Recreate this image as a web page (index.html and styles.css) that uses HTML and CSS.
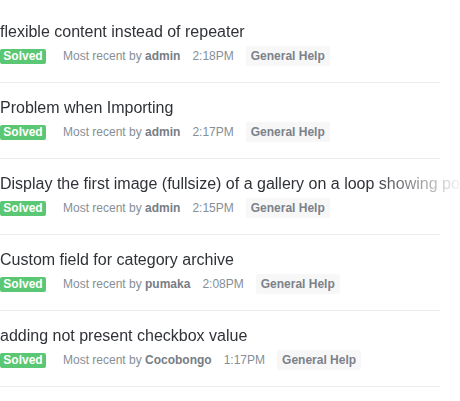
FILE: index.html
```html
<!DOCTYPE html>
<html>
<head>
<meta charset="utf-8">
<link rel="stylesheet" href="styles.css">
</head>
<body>
<ul class="list">
  <li class="item">
    <div class="title">flexible content instead of repeater</div>
    <div class="meta"><span class="badge">Solved</span><span class="recent">Most recent by <b>admin</b></span><span class="time">2:18PM</span><span class="tag">General Help</span></div>
  </li>
  <li class="item">
    <div class="title">Problem when Importing</div>
    <div class="meta"><span class="badge">Solved</span><span class="recent">Most recent by <b>admin</b></span><span class="time">2:17PM</span><span class="tag">General Help</span></div>
  </li>
  <li class="item">
    <div class="title">Display the first image (fullsize) of a gallery on a loop showing posts</div>
    <div class="meta"><span class="badge">Solved</span><span class="recent">Most recent by <b>admin</b></span><span class="time">2:15PM</span><span class="tag">General Help</span></div>
  </li>
  <li class="item">
    <div class="title">Custom field for category archive</div>
    <div class="meta"><span class="badge">Solved</span><span class="recent">Most recent by <b>pumaka</b></span><span class="time">2:08PM</span><span class="tag">General Help</span></div>
  </li>
  <li class="item">
    <div class="title">adding not present checkbox value</div>
    <div class="meta"><span class="badge">Solved</span><span class="recent">Most recent by <b>Cocobongo</b></span><span class="time">1:17PM</span><span class="tag">General Help</span></div>
  </li>
</ul>
</body>
</html>
```
FILE: styles.css
```css
html, body {
  margin: 0;
  padding: 0;
  background: #fff;
}
body {
  font-family: "Liberation Sans", Arial, sans-serif;
  overflow: hidden;
}
.list {
  list-style: none;
  margin: 0;
  padding: 7px 0 0 0;
  width: 440px;
}
.item {
  border-bottom: 1px solid #ececec;
  padding: 15px 0 16px 0;
  height: 44px;
}
.title {
  font-size: 16px;
  line-height: 20px;
  color: #2f3237;
  white-space: nowrap;
  width: 460px;
  overflow: hidden;
  -webkit-mask-image: linear-gradient(to right, #000 370px, rgba(0,0,0,0.06) 460px);
  mask-image: linear-gradient(to right, #000 370px, rgba(0,0,0,0.06) 460px);
}
.meta {
  display: flex;
  align-items: center;
  margin-top: 4px;
  height: 20px;
  font-size: 12px;
  color: #868e96;
  white-space: nowrap;
}
.badge {
  background: #5ac774;
  color: #fff;
  font-weight: bold;
  font-size: 12px;
  line-height: 15px;
  height: 15px;
  padding: 0 3px;
  border-radius: 2px;
  width: 40px;
  text-align: center;
}
.recent {
  margin-left: 17px;
}
.recent b {
  color: #777d84;
}
.time {
  margin-left: 12px;
}
.tag {
  margin-left: 12px;
  background: #f7f7f7;
  color: #7b828a;
  font-weight: bold;
  padding: 0 5px;
  line-height: 20px;
  border-radius: 2px;
}
```
